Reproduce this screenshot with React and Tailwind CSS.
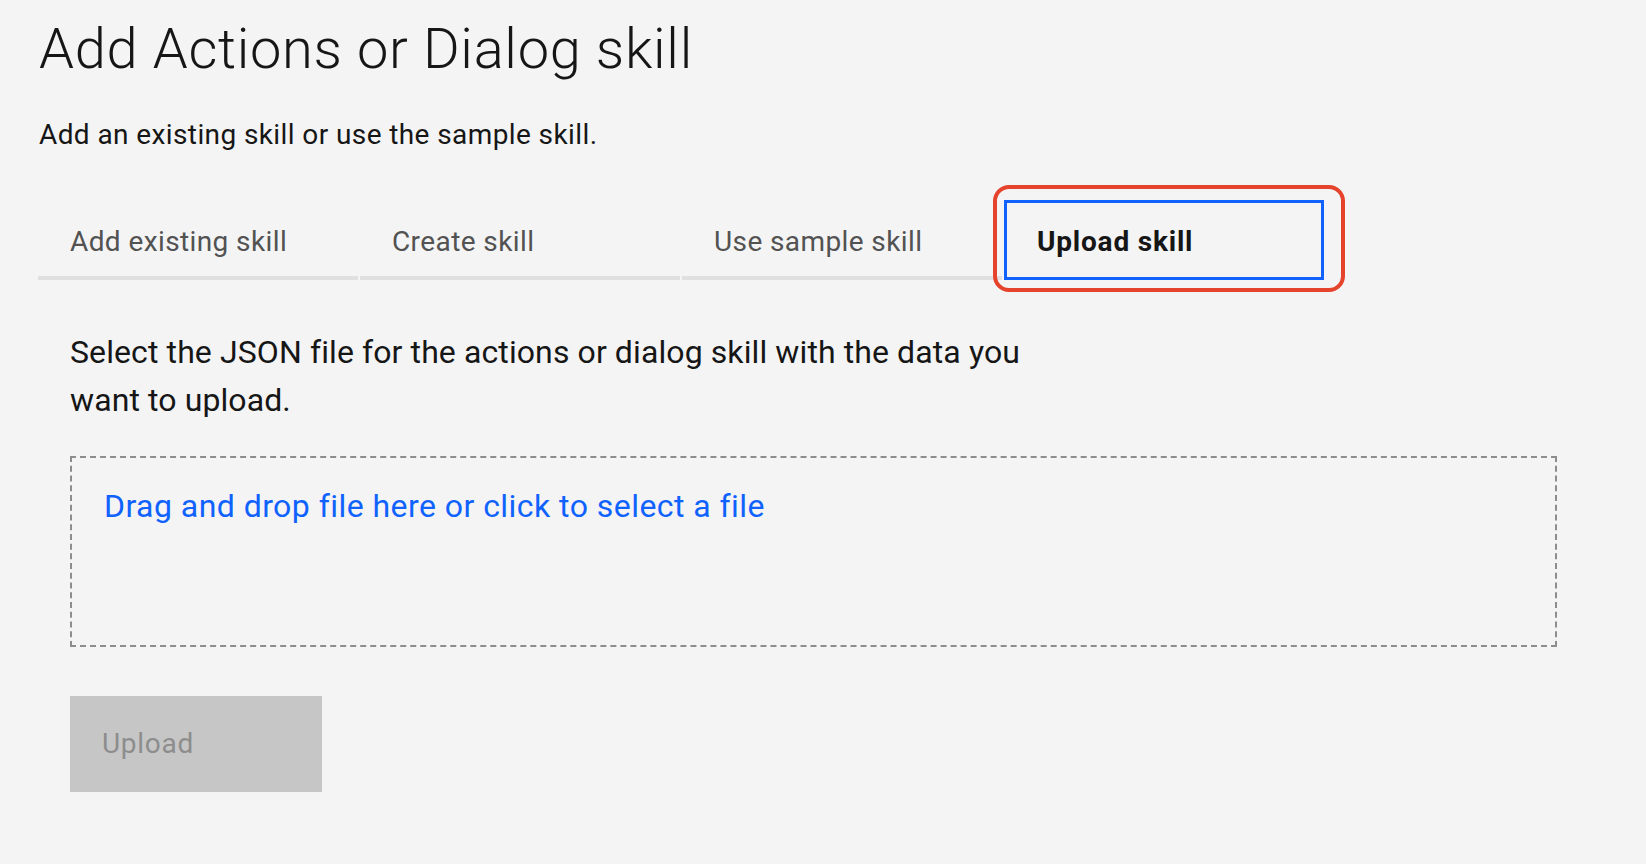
export default function App() {
  const tabs = ['Add existing skill', 'Create skill', 'Use sample skill']

  return (
    <div className="min-h-screen bg-[#f4f4f4] pl-[38px] pt-[21px] text-[#161616] font-['Roboto','Liberation_Sans',sans-serif]">
      <h1 className="text-[56px] leading-[56px] font-light tracking-[0.7px] pl-[1px]">Add Actions or Dialog skill</h1>
      <p className="mt-[42px] text-[28px] leading-[32px] tracking-[0.4px] pl-[1px]">Add an existing skill or use the sample skill.</p>

      {/* tabs */}
      <div className="mt-[49px] flex gap-[2px]">
        {tabs.map((tab) => (
          <div
            key={tab}
            className="w-[320px] h-[80px] pl-[32px] pt-[24px] border-b-4 border-[#e0e0e0] text-[28px] leading-[36px] tracking-[0.4px] text-[#525252]"
          >
            {tab}
          </div>
        ))}
        <div className="relative w-[320px] h-[80px] pl-[30px] pt-[21px] border-[3px] border-[#0f62fe] text-[28px] leading-[36px] tracking-[0.8px] font-bold text-[#161616]">
          Upload skill
          <div className="absolute -left-[14px] -top-[18px] w-[352px] h-[107px] border-4 border-[#e5432b] rounded-[16px] pointer-events-none"></div>
        </div>
      </div>

      {/* upload panel */}
      <div className="pl-[32px]">
        <p className="mt-[48px] text-[32px] leading-[48px] tracking-[0.1px]">
          Select the JSON file for the actions or dialog skill with the data you
          <br />
          want to upload.
        </p>

        <div className="mt-[32px] w-[1487px] h-[191px] border-2 border-dashed border-[#8d8d8d] pl-[32px] pt-[30px]">
          <span className="text-[32px] leading-[36px] tracking-[0.45px] text-[#0f62fe]">Drag and drop file here or click to select a file</span>
        </div>

        <button className="mt-[49px] w-[252px] h-[96px] bg-[#c6c6c6] pl-[32px] flex items-center text-[28px] tracking-[0.7px] text-[#8d8d8d] cursor-not-allowed">
          Upload
        </button>
      </div>
    </div>
  )
}
